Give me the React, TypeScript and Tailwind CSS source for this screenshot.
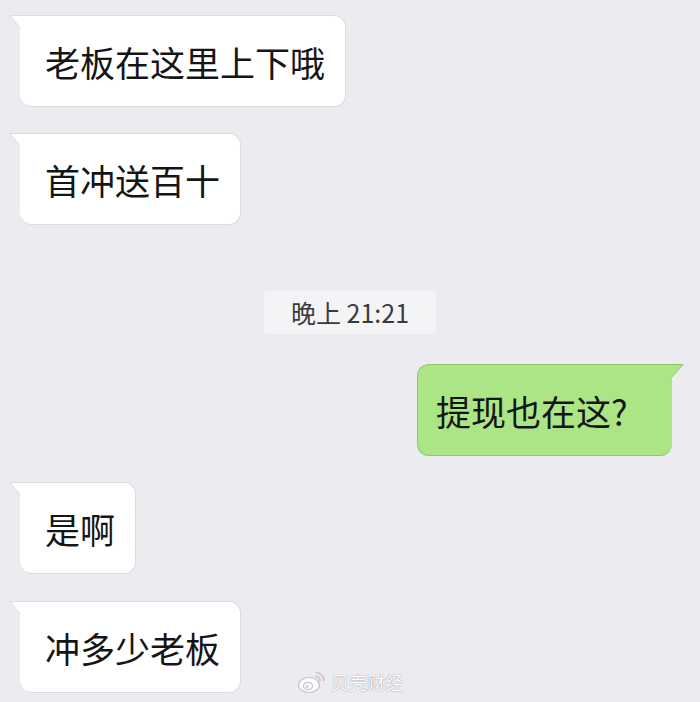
import React from 'react';

const cjk = { fontFamily: '"Noto Sans CJK SC", "Noto Sans", sans-serif' };

function LeftBubble({ text, className = '' }: { text: string; className?: string }) {
  return (
    <div className={`relative self-start ml-[20px] ${className}`}>
      <svg className="absolute -left-[11px] top-0" width="13" height="16" viewBox="0 0 13 16">
        <path d="M12 0.5 L1 0.5 L12 13.5 Z" fill="#ffffff" />
        <path d="M12 0.5 L1 0.5 L11 13" fill="none" stroke="#dcdce0" strokeWidth="1" />
      </svg>
      <div className="h-[92px] flex items-center pl-[25px] pr-[20px] bg-white rounded-[12px] rounded-tl-none border border-[#dcdce0] border-l-0 text-[35px] text-[#151515] leading-none">
        {text}
      </div>
    </div>
  );
}

function RightBubble({ text }: { text: string }) {
  return (
    <div className="relative self-end mr-[28px] mt-[30px]">
      <svg className="absolute -right-[12px] top-0" width="14" height="16" viewBox="0 0 14 16">
        <path d="M1 0.5 L13 0.5 L1 13.5 Z" fill="#abe586" />
        <path d="M1 0.5 L13 0.5 L2 13" fill="none" stroke="#8fc86d" strokeWidth="1" />
      </svg>
      <div className="h-[92px] w-[255px] flex items-center pl-[18px] bg-[#abe586] rounded-[12px] rounded-tr-none border border-[#8fc86d] border-r-0 text-[35px] text-[#151515] leading-none">
        {text}
      </div>
    </div>
  );
}

export default function App() {
  return (
    <div className="relative w-[700px] h-[702px] overflow-hidden bg-[#ebebf0]" style={cjk}>
      <div className="flex flex-col pt-[15px]">
        <LeftBubble text="老板在这里上下哦" />
        <LeftBubble text="首冲送百十" className="mt-[26px]" />

        <div className="self-center mt-[66px] h-[43px] px-[27px] flex items-center bg-[#f4f4f7] rounded-[3px] text-[25px] text-[#3a3a3a] leading-none">
          晚上 21:21
        </div>

        <RightBubble text="提现也在这?" />

        <LeftBubble text="是啊" className="mt-[26px]" />
        <LeftBubble text="冲多少老板" className="mt-[27px]" />
      </div>

      <div className="absolute left-[297px] top-[670px] flex items-center gap-[4px]">
        <svg width="30" height="24" viewBox="0 0 30 24">
          <ellipse cx="12" cy="15" rx="10.5" ry="7.5" fill="#ffffff" stroke="#c4c4c8" strokeWidth="1.2" />
          <ellipse cx="11" cy="16" rx="4.5" ry="3.6" fill="none" stroke="#c4c4c8" strokeWidth="1.2" />
          <circle cx="10" cy="16.5" r="1.3" fill="#c4c4c8" />
          <path d="M19 2.5 A8 8 0 0 1 27 10.5" fill="none" stroke="#c4c4c8" strokeWidth="1.6" strokeLinecap="round" />
          <path d="M19 6.5 A4 4 0 0 1 23 10.5" fill="none" stroke="#c4c4c8" strokeWidth="1.6" strokeLinecap="round" />
        </svg>
        <span className="text-[18px] text-white leading-none [text-shadow:0_0_1px_#9a9aa0,0_0_1px_#9a9aa0]">贝壳财经</span>
      </div>
    </div>
  );
}
